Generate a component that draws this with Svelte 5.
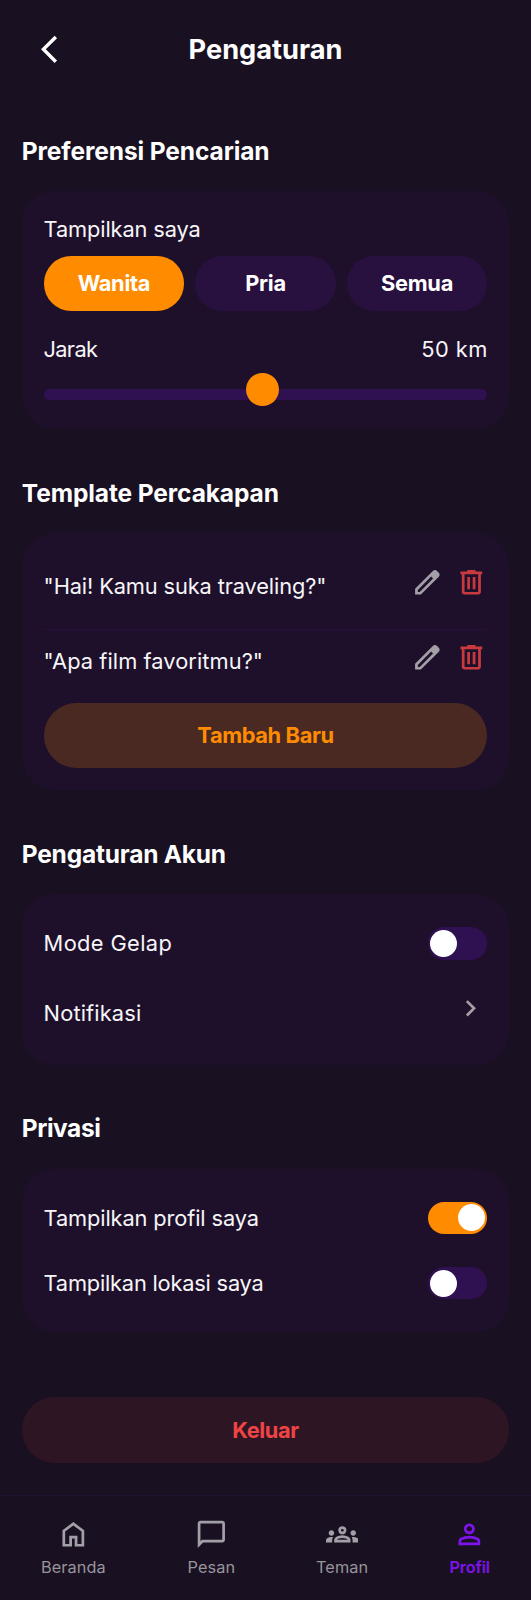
<script>
  const icons = {
    back: 'M400-80 0-480l400-400 71 71-329 329 329 329-71 71Z',
    edit: 'M200-200h57l391-391-57-57-391 391v57Zm-80 80v-170l528-527q12-11 26.5-17t30.5-6q16 0 31 6t26 18l55 56q12 11 17.5 26t5.5 30q0 16-5.5 30.5T817-647L290-120H120Zm640-584-56-56 56 56Zm-141 85-28-29 57 57-29-28Z',
    trash: 'M280-120q-33 0-56.5-23.5T200-200v-520h-40v-80h200v-40h240v40h200v80h-40v520q0 33-23.5 56.5T680-120H280Zm400-600H280v520h400v-520ZM360-280h80v-360h-80v360Zm160 0h80v-360h-80v360Z',
    chevron: 'M504-480 320-664l56-56 240 240-240 240-56-56 184-184Z',
    home: 'M240-200h120v-240h240v240h120v-360L480-740 240-560v360Zm-80 80v-480l320-240 320 240v480H520v-240h-80v240H160Z',
    chat: 'M80-80v-720q0-33 23.5-56.5T160-880h640q33 0 56.5 23.5T880-800v480q0 33-23.5 56.5T800-240H240L80-80Zm126-240h594v-480H160v525l46-45Z',
    groups: 'M0-240v-63q0-43 44-70t116-27q13 0 25 .5t23 2.5q-14 21-21 44t-7 48v65H0Zm240 0v-65q0-32 17.5-58.5T307-410q32-20 76.5-30t96.5-10q53 0 97.5 10t76.5 30q32 20 49 46.5t17 58.5v65H240Zm540 0v-65q0-26-6.5-49T754-397q11-2 22.5-2.5t23.5-.5q72 0 116 26.5t44 70.5v63H780Zm-455-80h311q-10-20-55.5-35T480-370q-55 0-100.5 15T325-320ZM160-440q-33 0-56.5-23.5T80-520q0-34 23.5-57t56.5-23q34 0 57 23t23 57q0 33-23 56.5T160-440Zm640 0q-33 0-56.5-23.5T720-520q0-34 23.5-57t56.5-23q34 0 57 23t23 57q0 33-23 56.5T800-440Zm-320-40q-50 0-85-35t-35-85q0-51 35-85.5t85-34.5q51 0 85.5 34.5T600-600q0 50-34.5 85T480-480Zm0-80q17 0 28.5-11.5T520-600q0-17-11.5-28.5T480-640q-17 0-28.5 11.5T440-600q0 17 11.5 28.5T480-560Z',
    person: 'M480-480q-66 0-113-47t-47-113q0-66 47-113t113-47q66 0 113 47t47 113q0 66-47 113t-113 47ZM160-160v-112q0-34 17.5-62.5T224-378q62-31 126-46.5T480-440q66 0 130 15.5T736-378q29 15 46.5 43.5T800-272v112H160Zm80-80h480v-32q0-11-5.5-20T700-306q-54-27-109-40.5T480-360q-56 0-111 13.5T260-306q-9 5-14.5 14t-5.5 20v32Zm240-320q33 0 56.5-23.5T560-640q0-33-23.5-56.5T480-720q-33 0-56.5 23.5T400-640q0 33 23.5 56.5T480-560Z'
  };

  let gender = $state('Wanita');
  let dark = $state(false);
  let showProfile = $state(true);
  let showLocation = $state(false);

  const templates = ['"Hai! Kamu suka traveling?"', '"Apa film favoritmu?"'];
  const tabs = [
    { label: 'Beranda', icon: 'home', width: 65 },
    { label: 'Pesan', icon: 'chat', width: 47.5 },
    { label: 'Teman', icon: 'groups', width: 50.5 },
    { label: 'Profil', icon: 'person', width: 41, active: true }
  ];
</script>

{#snippet icon(name)}
  <svg class="icon" viewBox="0 -960 960 960" aria-hidden="true"><path d={icons[name]} /></svg>
{/snippet}

{#snippet toggle(label, on, flip)}
  <button class="toggle" class:on role="switch" aria-checked={on} aria-label={label} onclick={flip}>
    <span class="knob"></span>
  </button>
{/snippet}

<div class="page">
  <header>
    <button class="back" aria-label="Kembali">{@render icon('back')}</button>
    <h1>Pengaturan</h1>
  </header>

  <main>
    <section>
      <h2>Preferensi Pencarian</h2>
      <div class="card search">
        <p>Tampilkan saya</p>
        <div class="segments">
          {#each ['Wanita', 'Pria', 'Semua'] as g}
            <button class="segment" class:selected={gender === g} onclick={() => (gender = g)}>{g}</button>
          {/each}
        </div>
        <div class="distance">
          <span class="name">Jarak</span>
          <span class="value">50 km</span>
        </div>
        <div class="track"><span class="thumb"></span></div>
      </div>
    </section>

    <section>
      <h2>Template Percakapan</h2>
      <div class="card">
        {#each templates as text}
          <div class="template">
            <p>{text}</p>
            <button class="edit" aria-label="Edit">{@render icon('edit')}</button>
            <button class="delete" aria-label="Hapus">{@render icon('trash')}</button>
          </div>
        {/each}
        <button class="pill add">Tambah Baru</button>
      </div>
    </section>

    <section>
      <h2 class="account">Pengaturan Akun</h2>
      <div class="card rows">
        <div class="row">
          <p class="mode">Mode Gelap</p>
          {@render toggle('Mode Gelap', dark, () => (dark = !dark))}
        </div>
        <div class="row link">
          <p>Notifikasi</p>
          {@render icon('chevron')}
        </div>
      </div>
    </section>

    <section>
      <h2 class="privacy">Privasi</h2>
      <div class="card rows">
        <div class="row">
          <p>Tampilkan profil saya</p>
          {@render toggle('Tampilkan profil saya', showProfile, () => (showProfile = !showProfile))}
        </div>
        <div class="row">
          <p class="location">Tampilkan lokasi saya</p>
          {@render toggle('Tampilkan lokasi saya', showLocation, () => (showLocation = !showLocation))}
        </div>
      </div>
    </section>

    <button class="pill logout">Keluar</button>
  </main>

  <nav>
    {#each tabs as tab}
      <a href="#{tab.icon}" class:active={tab.active} style="width: {tab.width}px">
        {@render icon(tab.icon)}
        <span>{tab.label}</span>
      </a>
    {/each}
  </nav>
</div>

<style>
  :global(body) {
    background: #191021;
  }

  .page {
    width: 531px;
    height: 1600px;
    display: flex;
    flex-direction: column;
    overflow: hidden;
    box-sizing: border-box;
    background: #191021;
    color: #f7f5f7;
    font: 400 21.8px/32.7px Inter, sans-serif;
  }

  button {
    margin: 0;
    padding: 0;
    border: 0;
    background: none;
    color: inherit;
    font: inherit;
    display: block;
  }

  h1, h2, p {
    margin: 0;
  }

  p {
    letter-spacing: -0.12px;
    white-space: nowrap;
  }

  .icon {
    display: block;
    width: 32.7px;
    height: 32.7px;
    fill: currentColor;
    flex: none;
  }

  header {
    height: 133.6px;
    display: grid;
    grid-template-columns: 65px 1fr 65px;
    align-items: start;
    padding: 32.5px 0 0;
    box-sizing: border-box;
    color: #fff;
  }

  .back {
    padding-left: 41px;
  }

  h1 {
    font-size: 27.2px;
    line-height: 34px;
    font-weight: 700;
    text-align: center;
    padding-top: 0.6px;
  }

  main {
    display: flex;
    flex-direction: column;
    gap: 46.8px;
    padding: 0 21.8px;
  }

  h2 {
    font-size: 24.5px;
    line-height: 34px;
    font-weight: 700;
    letter-spacing: -0.1px;
    color: #fff;
    margin-bottom: 23.4px;
    white-space: nowrap;
  }

  .account {
    letter-spacing: -0.22px;
  }

  .privacy {
    letter-spacing: -0.45px;
  }

  .card {
    background: #1e102b;
    border-radius: 32.7px;
    padding: 21.8px;
  }

  .search {
    padding-bottom: 28.8px;
  }

  .segments {
    display: grid;
    grid-template-columns: repeat(3, 1fr);
    gap: 10.9px;
    margin-top: 10.9px;
  }

  .segment {
    height: 54.4px;
    border-radius: 27.2px;
    background: #28103f;
    color: #fff;
    font-weight: 700;
    letter-spacing: -0.3px;
  }

  .segment.selected {
    background: #ff8c00;
  }

  .distance {
    display: flex;
    justify-content: space-between;
    margin-top: 22px;
  }

  .name {
    letter-spacing: -0.7px;
  }

  .value {
    letter-spacing: 0.5px;
    margin-right: -0.5px;
  }

  .track {
    display: flex;
    align-items: center;
    margin-top: 23.8px;
    height: 11px;
    border-radius: 6px;
    background: #2f1050;
  }

  .thumb {
    width: 33px;
    height: 33px;
    border-radius: 50%;
    background: #ff8c00;
    margin-left: 202.8px;
    margin-top: -10.4px;
    flex: none;
  }

  .template {
    display: flex;
    align-items: flex-start;
    gap: 10.9px;
    height: 73px;
    padding-top: 10.9px;
    box-sizing: border-box;
  }

  .template:first-child {
    height: 75px;
    border-bottom: 1.4px solid #25103e;
  }

  .template p {
    flex: 1;
    margin-top: 4.4px;
  }

  .template:nth-child(2) p {
    letter-spacing: 0.07px;
  }

  .edit {
    color: #a39fa6;
  }

  .delete {
    color: #c93a3f;
  }

  .pill {
    width: 100%;
    height: 65.4px;
    border-radius: 32.7px;
    font-weight: 700;
    letter-spacing: -0.37px;
  }

  .add {
    background: #4a2923;
    color: #ff8c00;
  }

  .logout {
    margin-top: 18.5px;
    background: #2e1524;
    color: #ef4444;
  }

  .rows {
    display: flex;
    flex-direction: column;
    gap: 10.9px;
  }

  .row {
    display: flex;
    align-items: center;
    justify-content: space-between;
    height: 54.4px;
  }

  .mode {
    letter-spacing: 0.38px;
  }

  .location {
    letter-spacing: -0.2px;
  }

  .link {
    align-items: flex-start;
    height: 61.4px;
    padding-top: 10.9px;
    box-sizing: border-box;
  }

  .link p {
    margin-top: 4.4px;
    letter-spacing: 0.15px;
  }

  .link .icon {
    fill: #a39fa6;
  }

  .toggle {
    width: 59.9px;
    height: 32.7px;
    border-radius: 16.4px;
    background: #2f1050;
    padding: 0 2.7px;
    display: flex;
    align-items: center;
    box-sizing: border-box;
  }

  .toggle.on {
    background: #ff8c00;
    justify-content: flex-end;
  }

  .knob {
    width: 27.2px;
    height: 27.2px;
    border-radius: 50%;
    background: #fff;
  }

  nav {
    margin-top: auto;
    height: 105px;
    flex: none;
    display: flex;
    justify-content: space-around;
    border-top: 1.4px solid #231036;
    box-sizing: border-box;
    padding-top: 22.2px;
  }

  nav a {
    display: flex;
    flex-direction: column;
    align-items: center;
    color: #98949b;
    text-decoration: none;
    font-size: 16.3px;
    line-height: 22px;
    letter-spacing: 0.1px;
    gap: 5px;
  }

  nav .icon {
    fill: #a39fa6;
  }

  nav .active {
    color: #7f13ec;
    font-weight: 600;
    letter-spacing: -0.2px;
  }

  nav .active .icon {
    fill: #7f13ec;
  }
</style>
